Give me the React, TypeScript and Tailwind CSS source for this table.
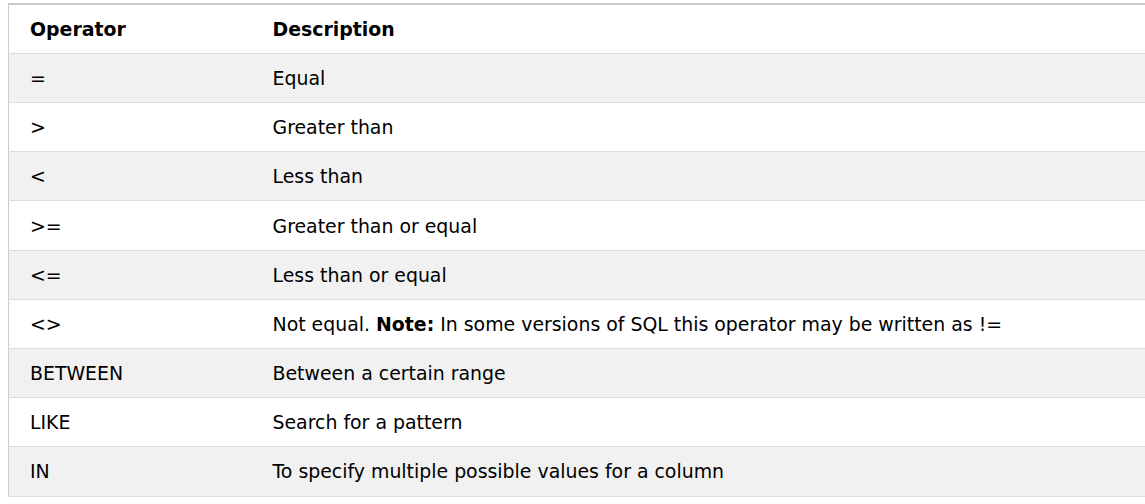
const rows: [string, React.ReactNode][] = [
  ["=", "Equal"],
  [">", "Greater than"],
  ["<", "Less than"],
  [">=", "Greater than or equal"],
  ["<=", "Less than or equal"],
  [
    "<>",
    <>
      Not equal. <b className="font-bold">Note:</b> In some versions of SQL this operator may be written as !=
    </>,
  ],
  ["BETWEEN", "Between a certain range"],
  ["LIKE", "Search for a pattern"],
  ["IN", "To specify multiple possible values for a column"],
];

export default function App() {
  return (
    <div className="w-[1145px] h-[504px] overflow-hidden bg-white pt-[3px] pl-[8px] font-['Verdana','DejaVu_Sans',sans-serif] text-[18.9px] text-[#000]">
      <table className="w-[1200px] border-collapse border border-[#ccc] border-t-2 border-t-[#c8c8c8]">
        <thead>
          <tr className="border-b border-[#ddd] bg-white">
            <th className="h-[49.4px] w-[254px] text-left font-bold pl-[21px] pr-[10px] leading-[28px]">Operator</th>
            <th className="h-[49.4px] text-left font-bold px-[10px] leading-[28px]">Description</th>
          </tr>
        </thead>
        <tbody>
          {rows.map(([op, desc], i) => (
            <tr key={i} className={`border-b border-[#ddd] ${i % 2 === 0 ? "bg-[#f1f1f1]" : "bg-white"}`}>
              <td className="h-[49.2px] pl-[21px] pr-[10px] leading-[28px]">{op}</td>
              <td className="h-[49.2px] px-[10px] leading-[28px]">{desc}</td>
            </tr>
          ))}
        </tbody>
      </table>
    </div>
  );
}
